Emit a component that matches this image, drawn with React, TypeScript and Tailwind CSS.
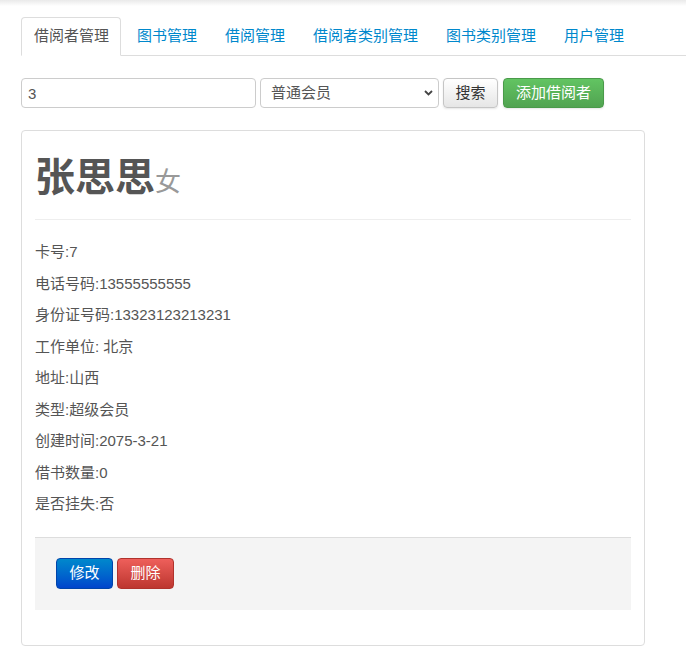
import React, { useState } from "react";

const tabs = ["借阅者管理", "图书管理", "借阅管理", "借阅者类别管理", "图书类别管理", "用户管理"];

const reader = {
  name: "张思思",
  sex: "女",
  rows: [
    "卡号:7",
    "电话号码:13555555555",
    "身份证号码:13323123213231",
    "工作单位: 北京",
    "地址:山西",
    "类型:超级会员",
    "创建时间:2075-3-21",
    "借书数量:0",
    "是否挂失:否",
  ],
};

const App = () => {
  const [active, setActive] = useState(0);
  const [keyword, setKeyword] = useState("3");
  const [type, setType] = useState("普通会员");

  return (
    <div
      className="min-h-[654px] bg-white text-[#555]"
      style={{ fontFamily: '"Liberation Sans", "Noto Sans CJK SC", sans-serif' }}
    >
      <div className="h-[6px] bg-gradient-to-b from-[#eaeaea] to-white" />

      <div className="pl-[21px] pt-[11px]">
        {/* tabs */}
        <div className="flex border-b border-[#ddd]">
          {tabs.map((t, i) => (
            <button
              key={t}
              onClick={() => setActive(i)}
              className={
                i === active
                  ? "-mb-px mr-[4px] rounded-t-[4px] border border-[#ddd] border-b-white bg-white pl-[12px] pr-[11px] pb-[9px] pt-[8px] text-[15px] leading-[20px] text-[#555]"
                  : "-mb-px mr-[4px] rounded-t-[4px] border border-transparent px-[11px] pb-[9px] pt-[8px] text-[15px] leading-[20px] text-[#0088cc]"
              }
            >
              {t}
            </button>
          ))}
        </div>

        {/* search form */}
        <div className="mt-[22px] flex items-center">
          <input
            value={keyword}
            onChange={(e) => setKeyword(e.target.value)}
            className="h-[30px] w-[235px] rounded-[4px] border border-[#ccc] px-[6px] text-[15px] text-[#555] outline-none"
          />
          <div className="relative ml-[4px]">
            <select
              value={type}
              onChange={(e) => setType(e.target.value)}
              className="h-[30px] w-[179px] appearance-none rounded-[4px] border border-[#ccc] bg-white pl-[10px] text-[15px] text-[#555] outline-none"
            >
              <option>普通会员</option>
              <option>超级会员</option>
            </select>
            <svg
              className="pointer-events-none absolute right-[6px] top-[12px]"
              width="9"
              height="6"
              viewBox="0 0 9 6"
            >
              <path d="M1 1l3.5 3.5L8 1" fill="none" stroke="#444" strokeWidth="1.8" />
            </svg>
          </div>
          <button className="ml-[4px] h-[30px] w-[55px] rounded-[4px] border border-[#c5c5c5] bg-gradient-to-b from-white to-[#e6e6e6] text-[15px] text-[#333] shadow-[0_1px_2px_rgba(0,0,0,0.1)]">
            搜索
          </button>
          <button className="ml-[5px] h-[30px] w-[101px] rounded-[4px] border border-[#4a9a4a] bg-gradient-to-b from-[#62c462] to-[#51a351] text-[15px] text-white shadow-[0_1px_2px_rgba(0,0,0,0.1)]">
            添加借阅者
          </button>
        </div>

        {/* reader card */}
        <div className="mt-[22px] w-[624px] rounded-[4px] border border-[#ddd] px-[13px] pb-[35px] pt-[13px]">
          <h1 className="mt-[11px] flex h-[44px] items-baseline text-[40px] font-bold leading-[44px] text-[#555]">
            {reader.name}
            <small className="text-[26px] font-normal leading-none text-[#999]">{reader.sex}</small>
          </h1>
          <hr className="mt-[20px] border-t border-[#eee]" />

          <div className="mt-[21px]">
            {reader.rows.map((r) => (
              <p key={r} className="mb-[10px] text-[15px] leading-[21.5px] text-[#555]">
                {r}
              </p>
            ))}
          </div>

          <div className="mt-[22px] border-t border-[#ddd] bg-[#f4f4f4] px-[21px] pb-[21px] pt-[20px]">
            <div className="flex gap-[4px]">
              <button className="h-[31px] w-[57px] rounded-[4px] border border-[#0044aa] bg-gradient-to-b from-[#0088cc] to-[#0044cc] text-[15px] text-white">
                修改
              </button>
              <button className="h-[31px] w-[57px] rounded-[4px] border border-[#b0322c] bg-gradient-to-b from-[#ee5f5b] to-[#bd362f] text-[15px] text-white">
                删除
              </button>
            </div>
          </div>
        </div>
      </div>
    </div>
  );
};

export default App;
